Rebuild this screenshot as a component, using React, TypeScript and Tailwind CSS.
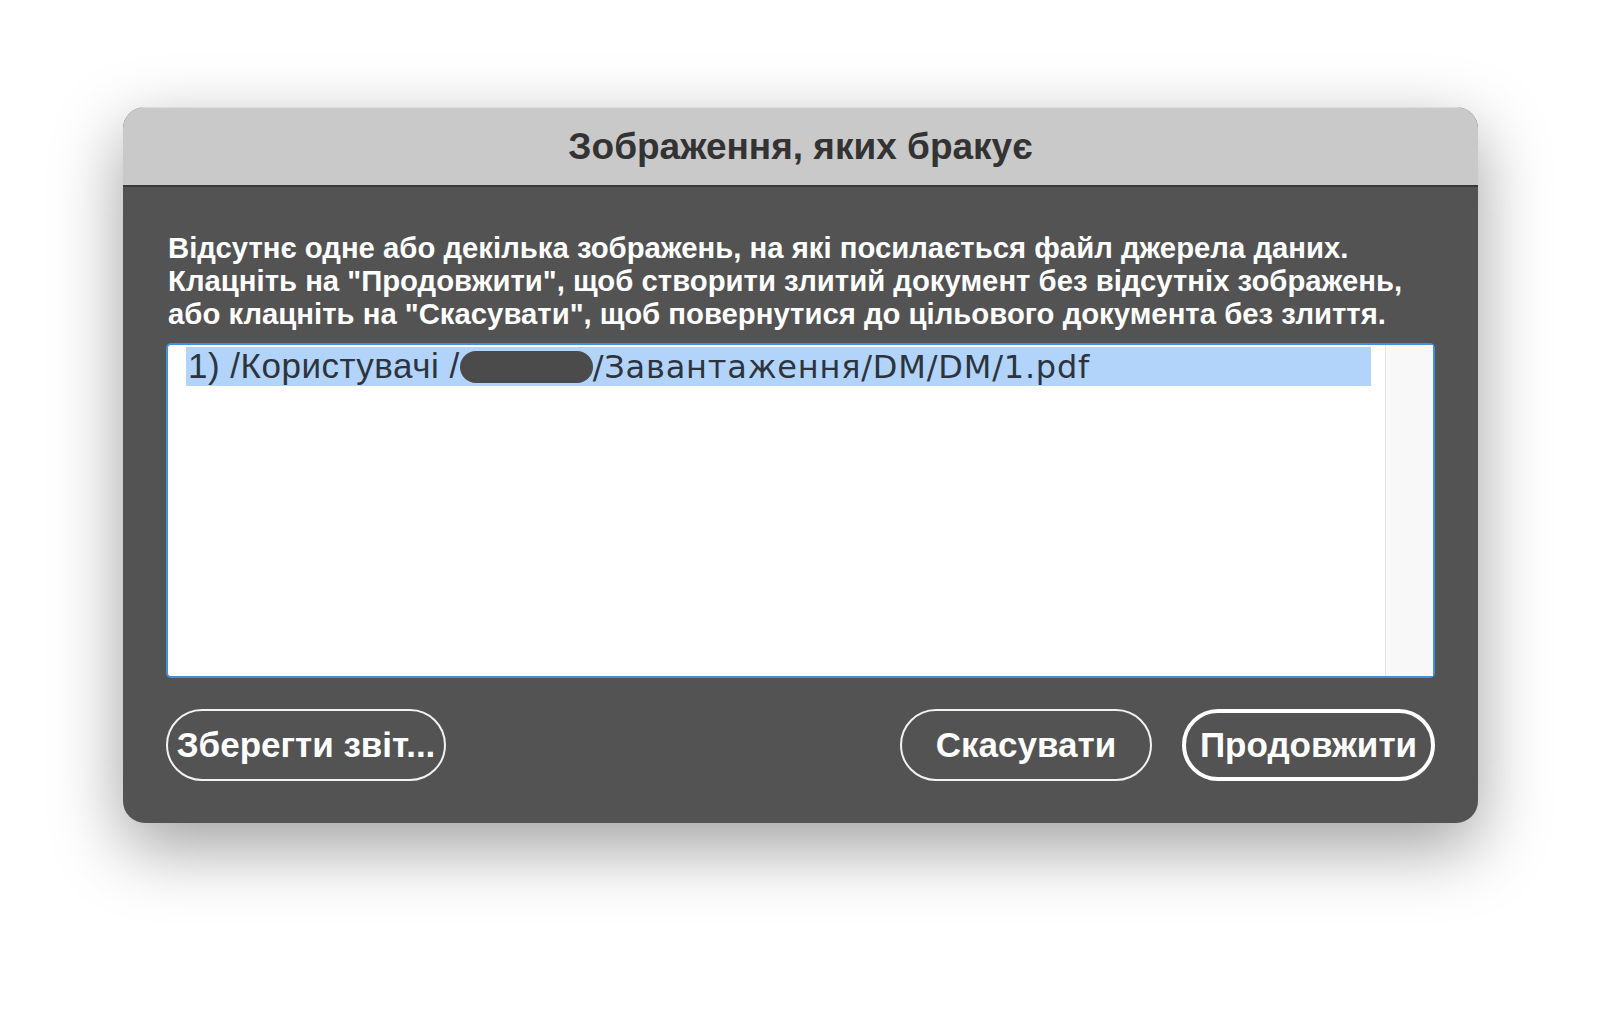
import React from 'react';

const sans = { fontFamily: '"Liberation Sans", Arial, sans-serif' };

function PillButton({ label, width, primary }: { label: string; width: string; primary?: boolean }) {
  return (
    <button
      className={`${width} h-[72px] rounded-full text-white font-bold text-[35px] flex items-center justify-center whitespace-nowrap ${
        primary ? 'border-[4px] border-white' : 'border-2 border-[#f2f2f2]'
      }`}
    >
      {label}
    </button>
  );
}

export default function App() {
  return (
    <div className="w-[1600px] h-[1033px] bg-white pl-[123px] pt-[107px]" style={sans}>
      <div className="w-[1355px] rounded-[22px] overflow-hidden bg-[#535353] shadow-[0_24px_70px_rgba(0,0,0,0.38)]">
        {/* Title bar */}
        <div className="h-[80px] bg-[#c9c9c9] border-t border-[#dedede] border-b-2 border-b-[#3a3a3a] flex items-center justify-center">
          <span className="text-[37px] font-bold text-[#333333]">Зображення, яких бракує</span>
        </div>

        {/* Body */}
        <div className="px-[43px] pt-[44px] pb-[42px]">
          <p className="pl-[2px] text-white font-bold text-[29.3px] leading-[33px] whitespace-nowrap">
            Відсутнє одне або декілька зображень, на які посилається файл джерела даних.
            <br />
            Клацніть на "Продовжити", щоб створити злитий документ без відсутніх зображень,
            <br />
            або клацніть на "Скасувати", щоб повернутися до цільового документа без злиття.
          </p>

          {/* List */}
          <div className="mt-[13px] h-[335px] bg-white border-2 border-[#3f8fe4] rounded-[5px] flex">
            <div className="flex-1 pt-[2px] pl-[18px] pr-[14px]">
              <div className="h-[39px] bg-[#b2d4fb] flex items-center text-[35px] text-[#2e343d] whitespace-nowrap">
                <span className="pl-[2px] tracking-[0.5px]">1) /Користувачі /</span>
                <span className="inline-block w-[133px] h-[32px] rounded-full bg-[#4b4b4b] mt-[1px]" />
                <span className="tracking-[0.8px]" style={{ fontFamily: '"DejaVu Sans", Verdana, sans-serif', fontSize: '32px' }}>
                  /Завантаження/DM/DM/1.pdf
                </span>
              </div>
            </div>
            <div className="w-[48px] bg-[#f8f8f8] border-l border-[#e3e3e3]" />
          </div>

          {/* Buttons */}
          <div className="mt-[31px] flex items-center">
            <PillButton label="Зберегти звіт..." width="w-[280px]" />
            <div className="flex-1" />
            <div className="flex gap-[30px]">
              <PillButton label="Скасувати" width="w-[252px]" />
              <PillButton label="Продовжити" width="w-[253px]" primary />
            </div>
          </div>
        </div>
      </div>
    </div>
  );
}
